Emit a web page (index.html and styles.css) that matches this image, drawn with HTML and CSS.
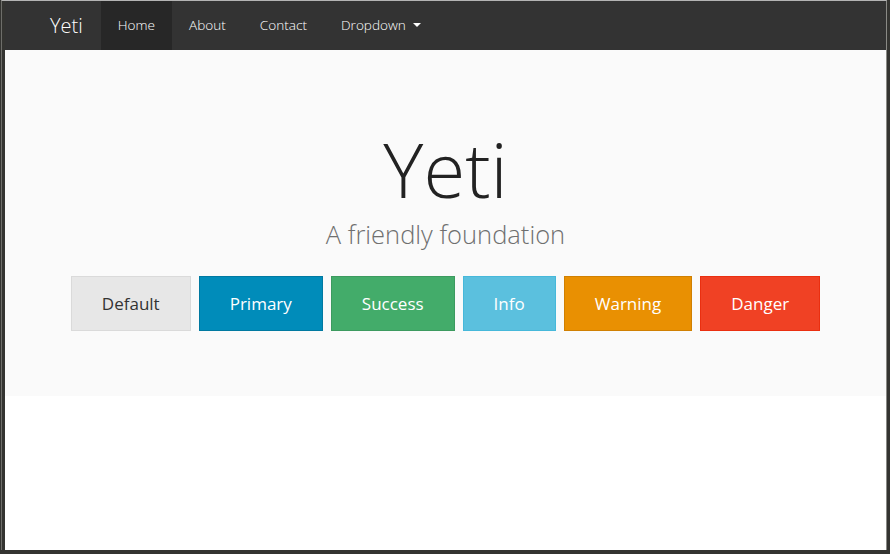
FILE: index.html
```html
<!DOCTYPE html>
<html lang="en">
<head>
<meta charset="utf-8">
<title>Yeti</title>
<link rel="stylesheet" href="styles.css">
</head>
<body>
<div class="window">
  <div class="page">
    <nav class="navbar">
      <a class="brand" href="#">Yeti</a>
      <ul class="nav">
        <li><a class="active" href="#">Home</a></li>
        <li><a href="#">About</a></li>
        <li><a href="#">Contact</a></li>
        <li><a href="#">Dropdown <span class="caret"></span></a></li>
      </ul>
    </nav>
    <section class="hero">
      <h1 class="title">Yeti</h1>
      <p class="lead">A friendly foundation</p>
      <div class="buttons">
        <a class="btn btn-default" href="#">Default</a>
        <a class="btn btn-primary" href="#">Primary</a>
        <a class="btn btn-success" href="#">Success</a>
        <a class="btn btn-info" href="#">Info</a>
        <a class="btn btn-warning" href="#">Warning</a>
        <a class="btn btn-danger" href="#">Danger</a>
      </div>
    </section>
  </div>
</div>
</body>
</html>
```
FILE: styles.css
```css
* { box-sizing: border-box; }
html, body { margin: 0; }
body {
  background: #343431;
  padding: 0 3px 4px 1px;
  height: 554px;
  font-family: "Open Sans", "Liberation Sans", sans-serif;
}
.window {
  height: 100%;
  background: #343431;
  border-top: 1px solid #b4b4b4;
  border-left: 1px solid #6e6e6a;
  border-right: 1px solid #8a8a86;
  padding-left: 3px;
}
.page {
  height: 549px;
  background: #ffffff;
  display: flex;
  flex-direction: column;
}
.navbar {
  height: 49px;
  background: #333333;
  display: flex;
  align-items: stretch;
  padding-left: 45px;
}
.brand {
  display: flex;
  align-items: center;
  color: #ffffff;
  text-decoration: none;
  font-size: 20px;
  font-weight: 300;
  padding: 0 18px 1px 0;
}
.nav {
  list-style: none;
  margin: 0;
  padding: 0;
  display: flex;
}
.nav li { display: flex; }
.nav a {
  display: flex;
  align-items: center;
  gap: 7px;
  padding: 0 17px 3px;
  color: #ffffff;
  text-decoration: none;
  font-size: 13.6px;
  font-weight: 300;
}
.nav a.active { background: #272727; }
.caret {
  display: inline-block;
  width: 0;
  height: 0;
  border-left: 4px solid transparent;
  border-right: 4px solid transparent;
  border-top: 4px solid #ffffff;
  margin-top: 2px;
}
.hero {
  background: #fafafa;
  height: 346px;
  display: flex;
  flex-direction: column;
  align-items: center;
  padding-top: 81px;
}
.title {
  margin: 0;
  font-size: 76px;
  font-weight: 300;
  color: #222222;
  line-height: 1;
}
.lead {
  margin: 10px 0 0;
  font-size: 25.5px;
  font-weight: 300;
  color: #6f6f6f;
  line-height: 1.4;
}
.buttons {
  display: flex;
  gap: 8px;
  margin-top: 23px;
}
.btn {
  display: flex;
  align-items: center;
  justify-content: center;
  height: 55px;
  padding: 0 30px;
  border: 1px solid transparent;
  font-size: 17px;
  color: #ffffff;
  text-decoration: none;
}
.btn-default { background: #e7e7e7; border-color: #dadada; color: #333333; }
.btn-primary { background: #008cba; border-color: #0079a1; }
.btn-success { background: #43ac6a; border-color: #3c9a5f; }
.btn-info { background: #5bc0de; border-color: #46b8da; }
.btn-warning { background: #e99002; border-color: #d08002; }
.btn-danger { background: #f04124; border-color: #ea2f10; }
```
